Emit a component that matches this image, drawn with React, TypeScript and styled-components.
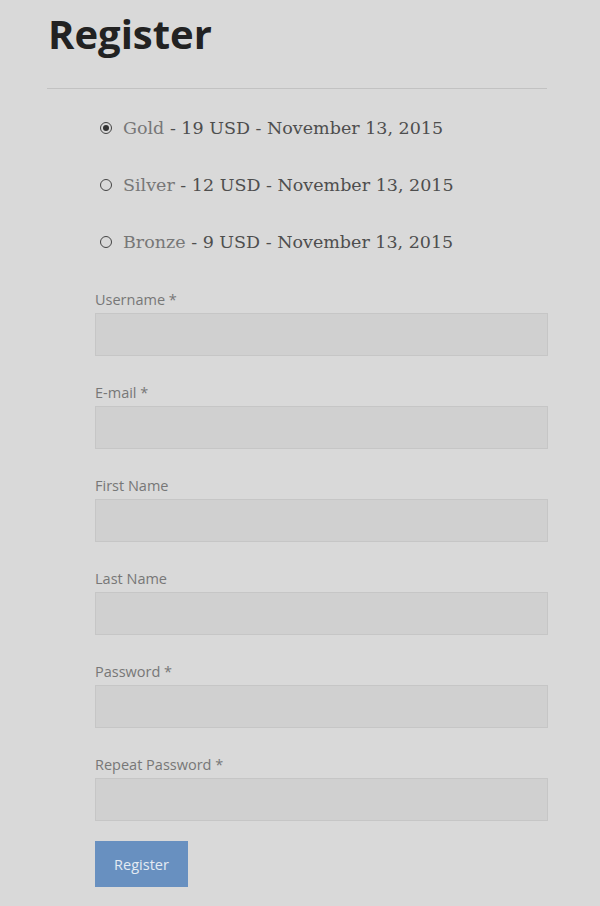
import styled, { createGlobalStyle } from 'styled-components'

const Global = createGlobalStyle`
  html, body {
    margin: 0;
    padding: 0;
    background: #d9d9d9;
  }
  body {
    font-family: "Open Sans", "Liberation Sans", sans-serif;
  }
`

const Page = styled.div`
  width: 500px;
  padding: 9px 0 0 47px;
`

const Title = styled.h1`
  margin: 0;
  font-size: 40px;
  font-weight: 700;
  line-height: 50px;
  color: #222;
  padding-left: 1px;
`

const Rule = styled.hr`
  margin: 29px 0 0;
  border: 0;
  border-top: 1px solid #c2c2c2;
`

const Form = styled.form`
  padding-left: 48px;
  width: 453px;
`

const Plans = styled.ul`
  list-style: none;
  margin: 0;
  padding: 26px 0 0 5px;
  display: flex;
  flex-direction: column;
  gap: 31px;
`

const Plan = styled.li`
  display: flex;
  align-items: center;
  gap: 11px;
  height: 26px;
  font-family: "DejaVu Serif", "Liberation Serif", serif;
  font-size: 17.5px;
  color: #4e4e4e;
`

const Dot = styled.span<{ $on?: boolean }>`
  width: 10px;
  height: 10px;
  border: 1px solid #444;
  border-radius: 50%;
  box-sizing: content-box;
  display: flex;
  align-items: center;
  justify-content: center;
  &::after {
    content: '';
    width: 6px;
    height: 6px;
    border-radius: 50%;
    background: ${(p) => (p.$on ? '#333' : 'transparent')};
  }
`

const Name = styled.span`
  color: #777;
`

const Fields = styled.div`
  padding-top: 35px;
  display: flex;
  flex-direction: column;
  gap: 27px;
`

const Field = styled.label`
  display: flex;
  flex-direction: column;
  gap: 3px;
`

const Label = styled.span`
  font-size: 14.5px;
  line-height: 20px;
  color: #777;
`

const Input = styled.input`
  box-sizing: border-box;
  width: 453px;
  height: 43px;
  margin: 0;
  background: #d0d0d0;
  border: 1px solid #c6c6c6;
  outline: none;
`

const Button = styled.button`
  margin-top: 20px;
  width: 93px;
  height: 46px;
  border: 0;
  background: #6890c0;
  color: #e4ebf3;
  font-family: "Open Sans", "Liberation Sans", sans-serif;
  font-size: 14.5px;
  padding: 0;
`

const plans = [
  { name: 'Gold', rest: ' - 19 USD - November 13, 2015', on: true },
  { name: 'Silver', rest: ' - 12 USD - November 13, 2015' },
  { name: 'Bronze', rest: ' - 9 USD - November 13, 2015' },
]

const fields = [
  { label: 'Username *', type: 'text' },
  { label: 'E-mail *', type: 'email' },
  { label: 'First Name', type: 'text' },
  { label: 'Last Name', type: 'text' },
  { label: 'Password *', type: 'password' },
  { label: 'Repeat Password *', type: 'password' },
]

export default function App() {
  return (
    <Page>
      <Global />
      <Title>Register</Title>
      <Rule />
      <Form onSubmit={(e) => e.preventDefault()}>
        <Plans>
          {plans.map((p) => (
            <Plan key={p.name}>
              <Dot $on={p.on} />
              <span>
                <Name>{p.name}</Name>
                {p.rest}
              </span>
            </Plan>
          ))}
        </Plans>
        <Fields>
          {fields.map((f) => (
            <Field key={f.label}>
              <Label>{f.label}</Label>
              <Input type={f.type} />
            </Field>
          ))}
        </Fields>
        <Button type="submit">Register</Button>
      </Form>
    </Page>
  )
}
